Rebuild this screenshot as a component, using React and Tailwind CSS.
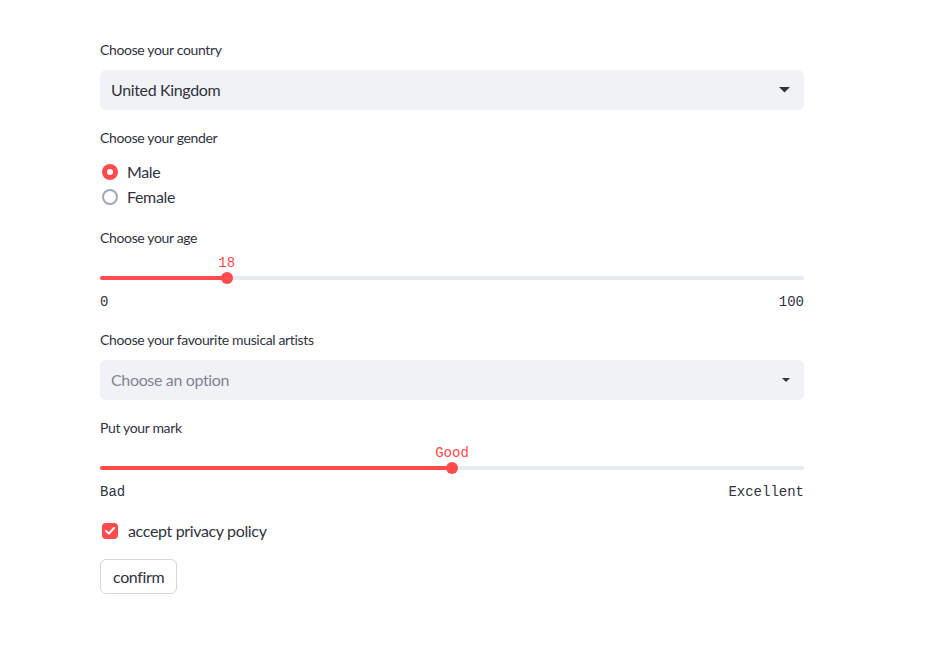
import React from "react";

const sans = { fontFamily: '"Source Sans Pro", Lato, "Noto Sans", sans-serif' };

function Label({ children, className = "" }) {
  return <div className={"text-[14px] leading-[20px] text-[#31333f] " + className}>{children}</div>;
}

function Caret({ w = 10 }) {
  return (
    <svg width={w} height={w / 2} viewBox="0 0 10 5">
      <path d="M0 0h10L5 5z" fill="#31333f" />
    </svg>
  );
}

function Select({ value, placeholder, small }) {
  return (
    <div className="mt-[10px] flex h-[40px] items-center justify-between rounded-md bg-[#f0f2f6] pl-[11px] pr-[14px]">
      <span className={"text-[16px] " + (value ? "text-[#31333f]" : "text-[#808495]")}>{value || placeholder}</span>
      {small ? <Caret w={8} /> : <Caret w={11} />}
    </div>
  );
}

function Slider({ pct, value, min, max }) {
  return (
    <div>
      <div className="relative mt-[7px] h-[16px]">
        <span
          className="absolute top-0 -translate-x-1/2 font-['Liberation_Mono',monospace] text-[14px] leading-[16px] tracking-normal text-[#ff4b4b]"
          style={{ left: pct + "%" }}
        >
          {value}
        </span>
      </div>
      <div className="relative h-[14px]">
        <div className="absolute left-0 right-0 top-[5px] h-[4px] rounded-full bg-[#e6eaf1]" />
        <div className="absolute left-0 top-[5px] h-[4px] rounded-full bg-[#ff4b4b]" style={{ width: pct + "%" }} />
        <div
          className="absolute top-[1px] h-[12px] w-[12px] -translate-x-1/2 rounded-full bg-[#ff4b4b]"
          style={{ left: pct + "%" }}
        />
      </div>
      <div className="mt-[7px] flex justify-between font-['Liberation_Mono',monospace] text-[14px] leading-[20px] tracking-normal text-[#31333f]">
        <span>{min}</span>
        <span>{max}</span>
      </div>
    </div>
  );
}

function Radio({ checked, label }) {
  return (
    <div className="flex h-[25px] items-center gap-[9px] pl-[2px]">
      {checked ? (
        <span className="flex h-[16px] w-[16px] items-center justify-center rounded-full bg-[#ff4b4b]">
          <span className="h-[6px] w-[6px] rounded-full bg-white" />
        </span>
      ) : (
        <span className="h-[16px] w-[16px] rounded-full border-2 border-[#a3a8b8] bg-white" />
      )}
      <span className="text-[16px] text-[#31333f]">{label}</span>
    </div>
  );
}

export default function App() {
  return (
    <div className="min-h-screen bg-white tracking-[-0.35px]" style={sans}>
      <div className="ml-[100px] w-[704px] pt-[40px]">
        <Label>Choose your country</Label>
        <Select value="United Kingdom" />

        <Label className="mt-[18px]">Choose your gender</Label>
        <div className="mt-[11px]">
          <Radio checked label="Male" />
          <Radio label="Female" />
        </div>

        <Label className="mt-[19px]">Choose your age</Label>
        <Slider pct={18} value="18" min="0" max="100" />

        <Label className="mt-[18px]">Choose your favourite musical artists</Label>
        <Select placeholder="Choose an option" small />

        <Label className="mt-[18px]">Put your mark</Label>
        <Slider pct={50} value="Good" min="Bad" max="Excellent" />

        <div className="mt-[16px] flex h-[26px] items-center gap-[10px] pl-[2px]">
          <span className="flex h-[16px] w-[16px] items-center justify-center rounded-[4px] bg-[#ff4b4b]">
            <svg width="10" height="8" viewBox="0 0 10 8">
              <path d="M1 4l3 2.6L9 1" fill="none" stroke="white" strokeWidth="2" strokeLinecap="round" strokeLinejoin="round" />
            </svg>
          </span>
          <span className="text-[16px] text-[#31333f]">accept privacy policy</span>
        </div>

        <button className="mt-[15px] h-[35px] rounded-md border border-[#d6d6d9] bg-white px-[12px] text-[16px] text-[#31333f]">
          confirm
        </button>
      </div>
    </div>
  );
}
